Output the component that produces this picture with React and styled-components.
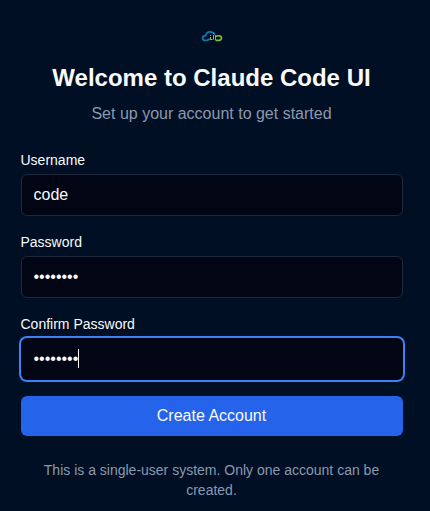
import React from 'react';
import styled, { createGlobalStyle, css } from 'styled-components';

const GlobalStyle = createGlobalStyle`
  * {
    box-sizing: border-box;
  }
  body {
    margin: 0;
    background: #000f24;
    color: #f8fafc;
    font-family: 'Liberation Sans', Arial, sans-serif;
    font-size: 16px;
    line-height: 24px;
  }
`;

const Logo = () => {
  return (
    <svg width='22' height='12' viewBox='0 0 22 12' fill='none'>
      <path
        d='M8.3 9.2C7.4 10.1 6 10.5 4.4 10.5C2.6 10.5 1.6 9.7 1.6 8.2C1.6 6.5 2.8 5.6 4.7 5.6C5.2 3 6.8 1.8 9 1.8C11.2 1.8 12.8 2.6 13.6 4'
        stroke='#1477b0'
        strokeWidth='1.7'
        strokeLinecap='round'
      />
      <path
        d='M9.5 5V6M9.5 7V10M12.5 3V4M12.5 5V9.6M14.5 5V10M9.5 9.5H11.5'
        stroke='#84c132'
        strokeWidth='1'
      />
      <path
        d='M14.6 6.5C15.6 5.9 16.6 5.8 17.6 5.8C19.6 5.8 20.5 6.7 20.5 8.1C20.5 9.6 19.6 10.4 17.8 10.4H14.5'
        stroke='#84c132'
        strokeWidth='1.6'
      />
    </svg>
  );
};

const Field = ({ label, id, type = 'text', value, focused }) => {
  return (
    <FieldWrapper>
      <label htmlFor={id}>{label}</label>
      <div className='control'>
        <Input id={id} type={type} defaultValue={value} $focused={focused} />
        {focused && <Caret />}
      </div>
    </FieldWrapper>
  );
};

const App = () => {
  return (
    <>
      <GlobalStyle />
      <Card>
        <Header>
          <div className='logo'>
            <Logo />
          </div>
          <h1>Welcome to Claude Code UI</h1>
          <p>Set up your account to get started</p>
        </Header>
        <Form onSubmit={(e) => e.preventDefault()}>
          <Field label='Username' id='username' value='code' />
          <Field
            label='Password'
            id='password'
            type='password'
            value='codecode'
          />
          <Field
            label='Confirm Password'
            id='confirmPassword'
            type='password'
            value='codecode'
            focused
          />
          <Button type='submit'>Create Account</Button>
        </Form>
        <Note>
          This is a single-user system. Only one account can be created.
        </Note>
      </Card>
    </>
  );
};

const Card = styled.main`
  width: 423px;
  height: 511px;
  padding: 26px 20.5px 0;
  display: flex;
  flex-direction: column;
  gap: 24px;
`;

const Header = styled.header`
  text-align: center;
  .logo {
    height: 20px;
    margin-bottom: 16px;
    display: flex;
    justify-content: center;
    align-items: center;
  }
  h1 {
    margin: 0;
    font-size: 24px;
    line-height: 32px;
    font-weight: 700;
  }
  p {
    margin: 8px 0 0;
    color: #8a99ae;
  }
`;

const Form = styled.form`
  display: flex;
  flex-direction: column;
  gap: 16px;
`;

const FieldWrapper = styled.div`
  label {
    display: block;
    margin-bottom: 4px;
    font-size: 14px;
    line-height: 20px;
  }
  .control {
    position: relative;
    display: flex;
  }
`;

const Input = styled.input`
  width: 100%;
  height: 42px;
  padding: 8px 12px;
  border: 1px solid #1e293b;
  border-radius: 6px;
  outline: none;
  background: #010514;
  color: #f8fafc;
  font: inherit;
  caret-color: transparent;
  ${({ $focused }) =>
    $focused &&
    css`
      border-color: transparent;
      box-shadow: 0 0 0 2px #3b82f6;
    `}
`;

const Caret = styled.span`
  position: absolute;
  left: 57.5px;
  top: 11px;
  width: 1px;
  height: 19px;
  background: #f8fafc;
`;

const Button = styled.button`
  height: 40px;
  border: none;
  border-radius: 6px;
  background: #2563eb;
  color: #f8fafc;
  font: inherit;
  cursor: pointer;
`;

const Note = styled.p`
  margin: 0;
  color: #8a99ae;
  font-size: 14px;
  line-height: 20px;
  text-align: center;
`;

export default App;
